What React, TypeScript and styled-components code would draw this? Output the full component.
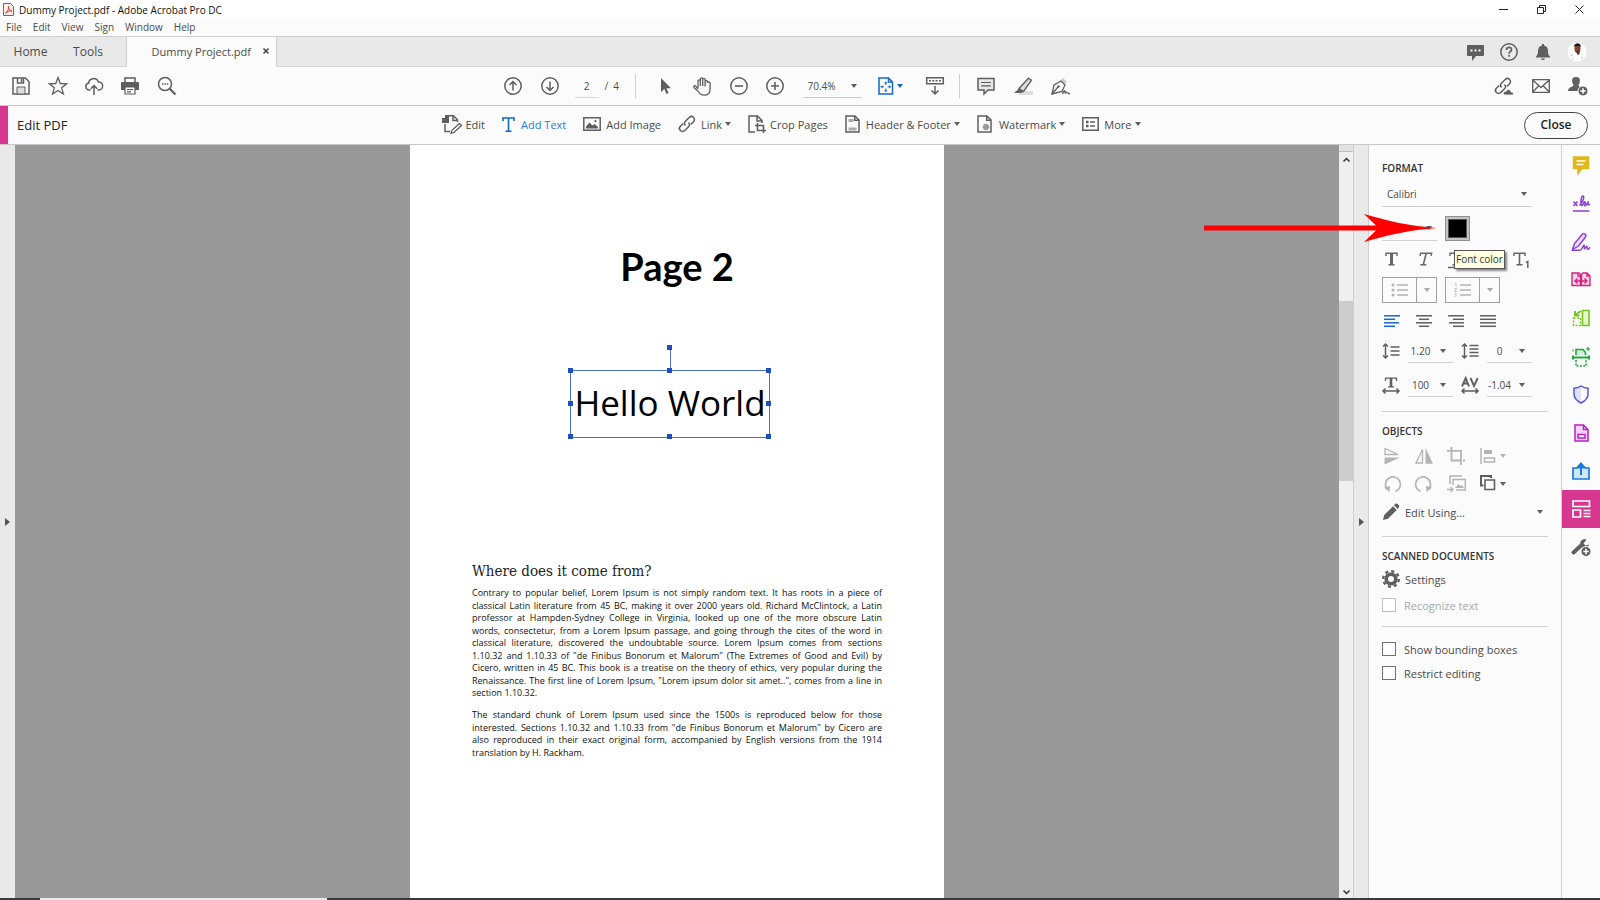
import React from "react";
import styled, { createGlobalStyle, css } from "styled-components";

const ink = "#5f5f5f";
const text = "#4b4b4b";
const line = "#cfcfcf";
const surface = "#fbfbfb";
const blue = "#1568c8";
const faded = "#b4b4b4";

const GlobalStyle = createGlobalStyle`
  * { box-sizing: border-box; }
  body { margin: 0; background: ${surface}; color: ${text}; font-family: "Open Sans", "Noto Sans", sans-serif; font-size: 11px; }
  button, input, select { font: inherit; color: inherit; }
  h1, h2, p { margin: 0; }
  svg { display: block; flex: none; overflow: visible; }
`;

/* ---------- shell ---------- */

const Shell = styled.div`
  display: flex;
  flex-direction: column;
  min-height: 100vh;
`;

const TitleBar = styled.header`
  display: flex;
  align-items: center;
  height: 19px;
  padding: 0 2px 0 3px;
  gap: 5px;
  background: #fff;
  color: #111;
  font-size: 10px;
  line-height: 16px;
`;

const TitleText = styled.span`
  flex: 1;
`;

const CellButton = styled.button<{ $w: number }>`
  display: flex;
  align-items: center;
  justify-content: center;
  width: ${(p) => p.$w}px;
  height: 100%;
  padding: 0;
  border: 0;
  background: none;
  color: ${ink};
`;

const MenuBar = styled.nav`
  display: flex;
  align-items: center;
  height: 17px;
  padding: 0 0 2px 6px;
  gap: 11px;
`;

const MenuItem = styled.button`
  padding: 0;
  border: 0;
  background: none;
  font-size: 10px;
  line-height: 14px;
`;

const TabBar = styled.nav`
  display: flex;
  height: 31px;
  padding-right: 6px;
  background: #e9e9e9;
  border-top: 1px solid ${line};
  box-shadow: inset 0 -1px 0 #d6d6d6;
`;

const MainTab = styled.button<{ $w: number }>`
  width: ${(p) => p.$w}px;
  padding: 0;
  border: 0;
  background: none;
  font-size: 12px;
  line-height: 28px;
`;

const FileTab = styled.div`
  display: flex;
  align-items: center;
  justify-content: flex-end;
  width: 151px;
  margin: 0 auto 0 11px;
  padding: 0 4px 2px 0;
  gap: 9px;
  background: ${surface};
  border: solid ${line};
  border-width: 0 1px;
`;

const ToolBar = styled.div<{ $h: number }>`
  display: grid;
  grid-template-columns: 1fr auto 1fr;
  height: ${(p) => p.$h}px;
  background: ${surface};
  border-bottom: 1px solid #c8c8c8;
`;

const Group = styled.div<{ $start?: number; $end?: number; $right?: boolean; $gap?: number }>`
  display: flex;
  align-items: center;
  gap: ${(p) => p.$gap ?? 0}px;
  padding-left: ${(p) => p.$start ?? 0}px;
  padding-right: ${(p) => p.$end ?? 0}px;
  justify-content: ${(p) => (p.$right ? "flex-end" : "flex-start")};
`;

const PageField = styled.input`
  width: 24px;
  height: 24px;
  padding: 0;
  border: 0;
  border-bottom: 1px solid #d8d8d8;
  background: none;
  text-align: center;
  font-size: 10px;
`;

const PageTotal = styled.span`
  font-size: 10px;
  width: 18px;
  white-space: pre;
`;

const Rule = styled.span`
  width: 1px;
  height: 24px;
  background: ${line};
`;

const Space = styled.div<{ $x: number }>`
  display: flex;
  align-items: center;
  height: 100%;
  padding: 0 ${(p) => p.$x}px;
`;

/* ---------- drop-down ---------- */

const SelectBox = styled.label<{ $w: number; $h: number; $center?: boolean }>`
  display: grid;
  align-items: center;
  width: ${(p) => p.$w}px;
  height: ${(p) => p.$h}px;
  border-bottom: 1px solid ${line};
  > * { grid-area: 1 / 1; }
  > svg { justify-self: end; margin-right: ${(p) => (p.$center ? 7 : 5)}px; pointer-events: none; }
`;

const NativeSelect = styled.select<{ $center?: boolean }>`
  appearance: none;
  width: 100%;
  height: 100%;
  padding: 0 ${(p) => (p.$center ? 20 : 5)}px 0 ${(p) => (p.$center ? 0 : 5)}px;
  border: 0;
  background: none;
  font-size: 10px;
  text-align: ${(p) => (p.$center ? "center" : "left")};
  text-align-last: ${(p) => (p.$center ? "center" : "left")};
`;

const Caret = ({ c = ink }: { c?: string }) => (
  <svg width="6" height="4" viewBox="0 0 6 4"><path d="M0 0h6L3 4z" fill={c} /></svg>
);

const Select = (p: { label: string; value: string; w: number; h: number; center?: boolean }) => (
  <SelectBox $w={p.w} $h={p.h} $center={p.center}>
    <NativeSelect aria-label={p.label} $center={p.center} defaultValue={p.value}>
      <option>{p.value}</option>
    </NativeSelect>
    <Caret />
  </SelectBox>
);

/* ---------- edit bar ---------- */

const EditTitle = styled.h1`
  display: flex;
  align-items: center;
  padding-left: 9px;
  border-left: 8px solid #d83790;
  color: #222;
  font-size: 13px;
  font-weight: 500;
`;

const EditTool = styled.button<{ $active?: boolean; $gap?: number }>`
  display: flex;
  align-items: center;
  height: 100%;
  padding: 0 0 2px;
  gap: ${(p) => p.$gap ?? 5}px;
  border: 0;
  background: none;
  white-space: nowrap;
  color: ${(p) => (p.$active ? "#2b7de0" : text)};
  > svg:last-child:not(:first-child) { margin-left: ${(p) => 3 - (p.$gap ?? 5)}px; }
`;

const CloseButton = styled.button`
  width: 64px;
  height: 27px;
  padding: 0 0 1px;
  border: 1px solid #444;
  border-radius: 14px;
  background: ${surface};
  color: #222;
  font-size: 12px;
  font-weight: 600;
`;

/* ---------- work area ---------- */

const Work = styled.div`
  display: flex;
  flex: 1;
`;

const Strip = styled.button<{ $w: number; $edge?: boolean }>`
  display: flex;
  flex: none;
  align-items: center;
  justify-content: center;
  width: ${(p) => p.$w}px;
  padding: 0;
  border: 0 solid ${line};
  border-width: ${(p) => (p.$edge ? "0 1px" : "0")};
  background: #e9e9e9;
`;

const Canvas = styled.main`
  display: flex;
  flex: 1;
  justify-content: center;
  background: #999;
`;

const Sheet = styled.article`
  width: 534px;
  padding: 97px 62px 40px;
  background: #fff;
  color: #000;
`;

const SheetTitle = styled.h2`
  font: 700 38px/48px Lato, sans-serif;
  text-align: center;
`;

const TextBox = styled.div`
  position: relative;
  width: 200px;
  height: 68px;
  margin: 80px 0 0 98px;
  border: 1px solid #4a6fc4;
  font: 35px/64px "Open Sans", sans-serif;
  text-align: center;
  white-space: nowrap;
`;

const Handle = styled.i<{ $x: number; $y: string }>`
  position: absolute;
  left: ${(p) => p.$x}%;
  top: ${(p) => p.$y};
  width: 5px;
  height: 5px;
  margin: -3px;
  background: #1f4fbf;
`;

const Stem = styled.i`
  position: absolute;
  left: 50%;
  top: -23px;
  width: 1px;
  height: 23px;
  background: #4a6fc4;
`;

const SheetHeading = styled.h2`
  margin-top: 121px;
  font: 400 15px/24px "DejaVu Serif Condensed", "Liberation Serif", serif;
  color: #222;
`;

const Paragraph = styled.p<{ $h: number; $top: number }>`
  display: grid;
  grid-auto-rows: 1fr;
  height: ${(p) => p.$h}px;
  margin-top: ${(p) => p.$top}px;
  font-size: 9px;
  line-height: 12px;
  color: #111;
`;

const Line = styled.span`
  text-align: justify;
  text-align-last: justify;
  white-space: nowrap;
  &:last-child { text-align-last: left; }
`;

const ScrollTrack = styled.div`
  display: flex;
  flex: none;
  flex-direction: column;
  align-items: center;
  width: 14px;
  padding-bottom: 3px;
  background: #efefef;
`;

const Splitter = styled.div`
  width: 100%;
  height: 7px;
  margin-bottom: 5px;
  background: #e3e3e3;
  border-bottom: 1px solid #bbb;
`;

const Thumb = styled.div`
  width: 100%;
  height: 180px;
  margin: 137px 0 auto;
  background: #cdcdcd;
`;

/* ---------- format panel ---------- */

const Panel = styled.aside`
  flex: none;
  width: 193px;
  padding: 13px 13px 13px 13px;
  border-right: 1px solid ${line};
  background: ${surface};
`;

const PanelTitle = styled.h2<{ $top?: number }>`
  margin-top: ${(p) => p.$top ?? 0}px;
  color: #333;
  font-size: 10px;
  font-weight: 600;
  line-height: 20px;
`;

const Row = styled.div<{ $top: number; $h: number; $gap?: number }>`
  position: relative;
  display: flex;
  align-items: center;
  gap: ${(p) => p.$gap ?? 12}px;
  height: ${(p) => p.$h}px;
  margin-top: ${(p) => p.$top}px;
`;

const Divider = styled.hr<{ $top: number }>`
  height: 1px;
  margin: ${(p) => p.$top}px 0 0;
  border: 0;
  background: ${line};
`;

const Swatch = styled.button`
  width: 25px;
  height: 25px;
  padding: 0;
  border: 1px solid #909090;
  background: #000;
  box-shadow: inset 0 0 0 2px #c4c4c4, inset 0 0 0 3px #555;
`;

const Tooltip = styled.div`
  position: absolute;
  left: 72px;
  top: 0;
  padding: 0 1px 1px;
  border: 1px solid #555;
  background: #ffffe1;
  box-shadow: 2px 2px 2px #0007;
  color: #333;
  font-size: 10px;
  line-height: 16px;
  white-space: nowrap;
`;

const Pointer = styled.svg`
  position: absolute;
  right: 111px;
  top: -1px;
  z-index: 2;
  pointer-events: none;
`;

const SplitButton = styled.div`
  display: flex;
  width: 55px;
  height: 26px;
  border: 1px solid #a0a0a0;
  > button + button { border-left: 1px solid #a0a0a0; }
`;

const WideButton = styled.button`
  display: flex;
  align-items: center;
  width: 161px;
  height: 20px;
  padding: 0;
  gap: 5px;
  border: 0;
  background: none;
  > svg:last-child:not(:first-child) { margin-left: auto; }
`;

const CheckLabel = styled.label<{ $top: number; $off?: boolean }>`
  display: flex;
  align-items: center;
  gap: 8px;
  height: 20px;
  margin-top: ${(p) => p.$top}px;
  ${(p) => p.$off && css`color: #a9a9a9;`}
`;

const Check = styled.input`
  appearance: none;
  width: 14px;
  height: 14px;
  margin: 0;
  border: 1px solid #707070;
  background: #fff;
  &:disabled { border-color: #c0c0c0; }
`;

/* ---------- tool rail ---------- */

const Rail = styled.nav`
  flex: none;
  width: 38px;
  padding-top: 3px;
  background: ${surface};
`;

const RailButton = styled.button<{ $active?: boolean }>`
  display: flex;
  align-items: center;
  justify-content: center;
  width: 100%;
  height: 38px;
  padding: 0;
  border: 0;
  background: ${(p) => (p.$active ? "#d83790" : "none")};
`;

const TaskEdge = styled.div`
  display: flex;
  height: 2px;
  padding-left: 40px;
  background: #3a3a3a;
`;

const TaskWindow = styled.span`
  width: 287px;
  background: #e9e9e9;
`;

/* ---------- icons ---------- */

type IconProps = { w?: number; h?: number; c?: string; s?: number; children: React.ReactNode };
const Icon = ({ w = 18, h = 18, c = ink, s = 1.5, children }: IconProps) => (
  <svg width={w} height={h} viewBox={`0 0 ${w} ${h}`} fill="none" stroke={c} strokeWidth={s} aria-hidden="true">
    {children}
  </svg>
);

const Save = () => (
  <Icon><path d="M1 1h12.5L17 4.500V17H1z" /><path d="M5.500 1v5h6V1M9.500 2v3" /><path d="M5 17v-7h8v7z" fill="#ddd" strokeWidth="1" /></Icon>
);
const Star = () => (
  <Icon w={20} h={20} s={1.300}><path d="M10 1.500l2.300 6 6.400.3-5 4 1.700 6.200-5.400-3.500L4.600 18l1.700-6.200-5-4 6.400-.3z" /></Icon>
);
const CloudUp = () => (
  <Icon><path d="M5.500 13H4a3.500 3.500 0 0 1-.4-6.900A5 5 0 0 1 13.300 5 4 4 0 0 1 14 13h-1.500" /><path d="M9 18V9M5.800 11.800L9 8.600l3.200 3.200" /></Icon>
);
const Printer = () => (
  <Icon><path d="M4 5V1h10v4" /><path d="M1 5h16a1 1 0 0 1 1 1v7h-4v-3H4v3H0V6a1 1 0 0 1 1-1z" fill={ink} stroke="none" /><path d="M4 10h10v7H4zM6 12.500h6M6 14.800h4" strokeWidth="1.200" /></Icon>
);
const Search = () => (
  <Icon w={20} h={20}><circle cx="8" cy="8" r="6.500" /><path d="M12.500 12.500l6 6" strokeWidth="2.200" /><path d="M4.800 8h1.500M7.300 8h1.500M9.800 8h1.500" /></Icon>
);
const ArrowCircle = ({ down }: { down?: boolean }) => (
  <Icon><circle cx="9" cy="9" r="8.200" /><path d={down ? "M9 4.500v9M5.500 10L9 13.500l3.500-3.500" : "M9 13.500v-9M5.500 8L9 4.500 12.500 8"} /></Icon>
);
const ZoomCircle = ({ plus }: { plus?: boolean }) => (
  <Icon><circle cx="9" cy="9" r="8.200" /><path d={plus ? "M5 9h8M9 5v8" : "M5 9h8"} strokeWidth="1.600" /></Icon>
);
const Cursor = () => (
  <Icon w={10} h={16}><path d="M0 0v14l3.300-3 2.200 5 2-.9-2-4.800H10z" fill={ink} stroke="none" /></Icon>
);
const Hand = () => (
  <Icon w={18} h={19} s={1.300}><path d="M5 11V4.200c0-1.800 2.300-1.800 2.300 0V9V2.300c0-1.900 2.400-1.900 2.400 0V9V2.800c0-1.900 2.400-1.900 2.400 0V9.500V4.600c0-1.700 2.300-1.700 2.300 0M14.400 4.600l.1 1.400c0-1.500 2.600-1.500 2.600 0V12c0 4-2.300 6.200-6 6.200-3.200 0-4.700-1.500-6-3.900L1 10.600C0 8.800 2 8 3 9.300L5 12" /></Icon>
);
const FitPage = () => (
  <Icon w={16} c={blue}><path d="M1 1h9.500L14.500 5v12H1z" /><path d="M10.500 1v4h4" /><path d="M7.800 4.500l-1.300 1.700h2.600zM7.800 15l-1.300-1.700h2.600zM2.500 9.800l1.700-1.300v2.600zM13 9.800l-1.700-1.300v2.600z" fill={blue} strokeWidth=".4" /><path d="M7.800 6v2M7.800 11.500v2M4 9.800h2M9.600 9.800h2" strokeWidth="1" /></Icon>
);
const Keyboard = () => (
  <Icon><path d="M.7.700h16.600v6H.7zM3 3.700h2M6.300 3.700h2M9.600 3.700h2M13 3.700h2" /><path d="M9 9v8M5.500 13.500L9 17l3.500-3.500" /></Icon>
);
const Comment = () => (
  <Icon><path d="M1 1.500h16v11.500h-6l-4 4v-4H1z" fill="#e8e8e8" /><path d="M4 5.500h10M4 8.800h10" strokeWidth="1.200" /></Icon>
);
const Highlight = () => (
  <Icon w={19}><path d="M7 14h12v4H4z" fill="#ddd" stroke="none" /><path d="M14.500 1.200l3 2L9.500 14.500 5 11.500z" fill="#ddd" strokeWidth="1.300" /><path d="M5 11.500l4.500 3-2 1.500H0z" fill={ink} stroke="none" /></Icon>
);
const Sign = () => (
  <Icon w={19}><path d="M11 2l4 4" strokeWidth="3" stroke="#ccc" /><path d="M1 17l2-9 7-4 4 4-3 6.500z" strokeWidth="1.300" /><path d="M1 17l6-7" strokeWidth="1.300" /><circle cx="7.500" cy="9.500" r="1.200" fill={ink} stroke="none" /><path d="M11.500 17c1-3 2.500-4 2.500-2.500s0 2 1 1 1.500 1.500 4 1.200" strokeWidth="1.400" /></Icon>
);
const EditPage = () => (
  <Icon w={20} h={19}><path d="M0 3h7v5H0zM3 0h4v3H3z" fill={ink} stroke="none" /><path d="M5 .8h6.500l4 4V7M11 1v4.500h4M3 9v7.500h5" /><path d="M17.500 8.500l2 2-7.500 7-3 .8 1-3z" fill="#fff" strokeWidth="1.300" /></Icon>
);
const AddText = () => (
  <Icon w={13} h={15} c={blue}><path d="M1 4V1h11v3M6.500 1v13M3.500 14.200h6" strokeWidth="1.600" /></Icon>
);
const Image = () => (
  <Icon w={18} h={14}><path d="M.8.800h16.400v12.400H.8z" /><path d="M3 11.500V9.500l3.500-4 3 3 2-1.500 3.500 3v1.500z" fill={ink} stroke="none" /><circle cx="12.500" cy="4.200" r="1.100" fill={ink} stroke="none" /></Icon>
);
const LinkShape = () => (
  <g><path d="M7.500 10.500c-1.800-1.800-1-3.200 0-4.200l3.700-3.800c1.200-1.200 3.200-1.200 4.400 0s1.200 3 0 4.200L12.800 9.500" /><path d="M10.500 7.500c1.800 1.800 1 3.200 0 4.200l-3.700 3.800c-1.200 1.200-3.200 1.200-4.400 0s-1.200-3 0-4.200L5.200 8.500" /></g>
);
const Crop = () => (
  <Icon><path d="M7 17H1V1h8.500L14 5.500V8M9 1v5h5" /><path d="M9.500 8v7.500H18M7 10.500h8.500V18" strokeWidth="1.600" /></Icon>
);
const HeaderFooter = () => (
  <Icon w={15}><path d="M3.500 4h5v3h-5zM3.500 12.500h8v3h-8z" fill="#aaa" stroke="none" /><path d="M1 1h9l4 4v12H1zM9.700 1v4.300H14" /></Icon>
);
const Watermark = () => (
  <Icon w={15}><circle cx="9" cy="12" r="3" fill="#999" stroke="#999" strokeWidth="1" strokeDasharray="1 1" /><path d="M1 1h9l4 4v12H1zM9.700 1v4.300H14" /></Icon>
);
const More = () => (
  <Icon w={17} h={14}><path d="M.8.800h15.400v12.400H.8zM8 5h5M8 9h5" /><path d="M4 3.700h2.500v2.500H4zM4 7.800h2.500v2.500H4z" fill={ink} stroke="none" /></Icon>
);
const AlignIcon = ({ rows, c = ink }: { rows: [number, number][]; c?: string }) => (
  <Icon w={16} h={12} c={c}>{rows.map(([a, b], i) => <path key={i} d={`M${a} ${i * 3.5 + 0.8}h${b}`} strokeWidth="1.500" />)}</Icon>
);
const Serif = ({ italic, under, sub, heavy }: { italic?: boolean; under?: boolean; sub?: boolean; heavy?: boolean }) => (
  <Icon w={16} h={14} c="#666">
    <g transform={italic ? "skewX(-14) translate(3 0)" : undefined}>
      <path d="M2 4V1.200h11V4M4.500 12.800h6" strokeWidth="1.400" /><path d="M7.500 1v12" strokeWidth={heavy ? 3 : 1.600} />
    </g>
    {under && <path d="M0 15.500h14" />}
    {sub && <path d="M14 10.500l1.800-1v6.500" />}
  </Icon>
);
const ListIcon = ({ numbered }: { numbered?: boolean }) => (
  <Icon w={18} h={14} c={faded}>
    <path d="M6 2h11M6 7h11M6 12h11" strokeWidth="1.300" />
    {numbered
      ? <path d="M1 .5h1V3.500M.5 5.500h2L.7 8.500h2M.5 10.500h2L1.500 12l1 1-2 .5" strokeWidth=".8" />
      : <g fill={faded} stroke="none"><circle cx="2" cy="2" r="1.500" /><circle cx="2" cy="7" r="1.500" /><circle cx="2" cy="12" r="1.500" /></g>}
  </Icon>
);
const LineHeight = ({ tall }: { tall?: boolean }) => (
  <Icon h={16}><path d="M3.500 1v14M1 3.500L3.500 1 6 3.500M1 12.500L3.500 15 6 12.500" /><path d={tall ? "M8.500 2.500h9M8.500 6h9M8.500 9.500h9M8.500 13h9" : "M8.500 4h9M8.500 8h9M8.500 12h9"} /></Icon>
);
const Width = ({ av }: { av?: boolean }) => (
  <Icon h={17}>
    {av ? <path d="M1 9.500L4.700 1 8 9.500M2.200 6.500h5M9.500 1L13 9l3.700-8" strokeWidth="1.900" /> : <><path d="M3.500 4V1.200h11V4M6 9.800h6" strokeWidth="1.300" /><path d="M9 1v9" strokeWidth="2.600" /></>}
    <path d="M1 14h16M3.500 11.500L1 14l2.500 2.500M14.500 11.500L17 14l-2.500 2.500" />
  </Icon>
);
const FlipV = () => <Icon c={faded}><path d="M2 1.500v6h13z" strokeWidth="1.300" /><path d="M1.500 10.500H17L1.500 17.500z" fill={faded} stroke="none" /></Icon>;
const FlipH = () => <Icon c={faded}><path d="M7.500 16V2.500L1 16z" strokeWidth="1.300" /><path d="M10.500 1v15.700H18z" fill={faded} stroke="none" /></Icon>;
const CropObj = () => <Icon c={faded}><path d="M4.500 0v13.500H14M0 3.800h14V18" strokeWidth="1.800" /><path d="M16 13.500h2" strokeWidth="1.800" /></Icon>;
const AlignObj = () => <Icon w={16} c={faded}><path d="M1 1v16" /><path d="M4 3h8v4H4z" fill={faded} stroke="none" /><path d="M4.500 11h10v4h-10z" /></Icon>;
const Undo = ({ flip }: { flip?: boolean }) => (
  <Icon c={faded}><g transform={flip ? "translate(18 0) scale(-1 1)" : undefined}><path d="M4 14A7.500 7.500 0 1 1 12.500 16.500" strokeWidth="1.700" /><path d="M1 12.500l6-1.500-.5 6z" fill={faded} stroke="none" /></g></Icon>
);
const Replace = () => <Icon w={19} c={faded}><path d="M3 9V1h12M6 10V4.500h12.300V15H9" /><path d="M8 13l3.500-4 2 2 1.500-1 2 3z" fill={faded} stroke="none" /><path d="M0 14.500h6M3.500 12L6 14.500 3.500 17" /></Icon>;
const Arrange = () => <Icon w={16}><path d="M3.500 10.500H1V1h10v2" strokeWidth="2" /><path d="M5 5h9.500v9.500H5z" strokeWidth="1.600" /></Icon>;
const Pencil = () => <Icon><path d="M1 17l1.200-5L11 3.300 14.700 7 6 15.800zM12 2.300l1.500-1.500c1.500-1.200 4.500 1.500 3.500 3.500L15.700 6z" fill={ink} stroke="none" /></Icon>;
const Gear = () => (
  <Icon><circle cx="9" cy="9" r="4.800" strokeWidth="3.600" /><circle cx="9" cy="9" r="7.800" strokeWidth="2.400" strokeDasharray="3.060 3.060" /></Icon>
);

const railIcons: [string, React.ReactNode][] = [
  ["Comment", <Icon h={22} c="#dfb81c"><path d="M1.500 1h15v11.500H10l-4 5v-5H1.500z" fill="#dfb81c" /><path d="M4.500 5h9M4.500 8.500h7" stroke="#fff" /></Icon>],
  ["Fill and sign", <Icon h={22} c="#8a3fd6" s={1.500}><path d="M.8 17h16.500M1.500 7.500l4 4.500M5.500 7.500l-4 4.500M7.500 11.500c4-4 5-9 3.500-9.500s-2.500 5-2 8 2.500.5 3-1.500 2 0 1 2 1.500 1.500 2.500-1.500c0-1.500 1.500-1 .5 0-.7 2 .5 2.500 2 1" /></Icon>],
  ["Certificates", <Icon w={20} h={20} c="#8a3fd6" s={1.400}><path d="M1.500 16.500l2-6L11 1.500c2-2 5 0 3.500 2.500l-7 9z" fill="#e6d8f7" /><path d="M1 17.200h8c2 0 3-5 4-5s-.5 3.500.5 3.500 1.500-2.500 2.300-2.500-.5 3 1 3 1-.5 2.200-2" /></Icon>],
  ["Combine files", <Icon w={20} h={18} c="#d4237f" s={1.400}><path d="M1 1h7l1.500 1.500V13.500H1zM10.500 13.500V2.500L12 1h4l3 3v9.500z" fill="#f9d5e7" /><path d="M4 9h12M6.500 6.500L4 9l2.500 2.500M13.500 6.500L16 9l-2.500 2.500M7 1v3h2M16 1v3h3" /></Icon>],
  ["Organize pages", <Icon h={20} c="#79c51d" s={1.600}><path d="M10.500 1.500h6.500v15h-6.500z" fill="#e4f5cf" /><path d="M1.500 9h7v7.500h-7z" strokeDasharray="2 1.500" /><path d="M9 2L3 6M3 2v4.500h4.500" strokeWidth="2" /></Icon>],
  ["Enhance scans", <Icon h={21} c="#1fa83f" s={1.600}><path d="M4 8V2.500h7l2.500 3V8" fill="#d3f0da" /><path d="M1 8.500v4M17 8.500v4M1 10.500h16" strokeWidth="2" /><path d="M4 13v6h10v-6" strokeDasharray="2 1.300" /><path d="M16 0v4M14 2h4M1 2.500v2" strokeWidth="1.200" /></Icon>],
  ["Protect", <Icon w={16} h={20} c="#5558dd"><path d="M8 1.500v16C4 15.500 1 12.500 1 9V3.500z" fill="#dfe0fa" stroke="none" /><path d="M8 1c2 1.500 4.500 2.300 7 2.300V9c0 4-3 7-7 9-4-2-7-5-7-9V3.300C3.500 3.300 6 2.500 8 1z" /></Icon>],
  ["Prepare form", <Icon w={15} c="#bb1fc4"><path d="M1 1h8.500L14 5.500V17H1zM9.500 1v4.500H14" fill="#f3d3f5" /><path d="M4 10.500h7v3.500H4z" fill="#fff" /></Icon>],
  ["Share", <Icon h={19} c="#1a7ae0"><path d="M5 6H1v11h16V6h-4" fill="#d2e6fb" strokeWidth="1.700" /><path d="M9 13V3M5.500 5.500L9 1.500l3.500 4z" fill="#1a7ae0" strokeWidth="2" /></Icon>],
  ["Edit PDF", <Icon c="#fff" s={1.700}><path d="M1 1h16.500v5.500H1zM1 10h7.500v7H1zM11.500 10.500h7M11.500 13.500h7M11.500 16.500h7" /></Icon>],
  ["More tools", <Icon w={19} h={19}><path d="M1.500 14.500l7-6.500" strokeWidth="4" strokeLinecap="round" /><path d="M14.500 1.500a4.500 4.500 0 1 0 2.500 5l-3.500 1-2-2z" fill={ink} stroke="none" /><circle cx="14" cy="13.500" r="5" fill={ink} stroke={surface} strokeWidth="1" /><path d="M11.300 13.500h5.400M14 10.800v5.400" stroke="#fff" strokeWidth="1.600" /></Icon>],
];

const first = [
  "Contrary to popular belief, Lorem Ipsum is not simply random text. It has roots in a piece of",
  "classical Latin literature from 45 BC, making it over 2000 years old. Richard McClintock, a Latin",
  "professor at Hampden-Sydney College in Virginia, looked up one of the more obscure Latin",
  "words, consectetur, from a Lorem Ipsum passage, and going through the cites of the word in",
  "classical literature, discovered the undoubtable source. Lorem Ipsum comes from sections",
  "1.10.32 and 1.10.33 of \"de Finibus Bonorum et Malorum\" (The Extremes of Good and Evil) by",
  "Cicero, written in 45 BC. This book is a treatise on the theory of ethics, very popular during the",
  "Renaissance. The first line of Lorem Ipsum, \"Lorem ipsum dolor sit amet..\", comes from a line in",
  "section 1.10.32.",
];
const second = [
  "The standard chunk of Lorem Ipsum used since the 1500s is reproduced below for those",
  "interested. Sections 1.10.32 and 1.10.33 from \"de Finibus Bonorum et Malorum\" by Cicero are",
  "also reproduced in their exact original form, accompanied by English versions from the 1914",
  "translation by H. Rackham.",
];
const handles: [number, string][] = [
  [0, "0%"], [50, "0%"], [100, "0%"], [0, "50%"], [100, "50%"], [0, "100%"], [50, "100%"], [100, "100%"], [50, "-23px"],
];

const Cell = ({ w, label, children }: { w: number; label: string; children: React.ReactNode }) => (
  <CellButton $w={w} aria-label={label}>{children}</CellButton>
);

export default function App() {
  return (
    <Shell>
      <GlobalStyle />
      <TitleBar>
        <Icon w={11} h={13} c="#e8372c" s={1}>
          <path d="M.5.500h7l3 3v9H.5z" fill="#fdecea" />
          <path d="M2.500 10c2-1 3.500-4 3-6.500-.5 2 1.500 4.500 3.500 4.500-2-.5-5 .5-6.500 2z" />
        </Icon>
        <TitleText>Dummy Project.pdf - Adobe Acrobat Pro DC</TitleText>
        <Group>
          <Cell w={38} label="Minimize"><Icon w={9} h={9} c="#222" s={1}><path d="M0 4.500h9" /></Icon></Cell>
          <Cell w={38} label="Restore"><Icon w={9} h={9} c="#222" s={1}><path d="M.5 2.500h6v6h-6zM2.500 2.500v-2h6v6h-2" /></Icon></Cell>
          <Cell w={38} label="Close window"><Icon w={9} h={9} c="#222" s={1}><path d="M.5.500l8 8M8.500.500l-8 8" /></Icon></Cell>
        </Group>
      </TitleBar>
      <MenuBar>
        {["File", "Edit", "View", "Sign", "Window", "Help"].map((m) => <MenuItem key={m}>{m}</MenuItem>)}
      </MenuBar>
      <TabBar>
        <MainTab $w={61}>Home</MainTab>
        <MainTab $w={54}>Tools</MainTab>
        <FileTab>
          <span>Dummy Project.pdf</span>
          <Cell w={12} label="Close tab"><Icon w={6} h={6} c="#444"><path d="M.5.500l5 5M5.500.500l-5 5" /></Icon></Cell>
        </FileTab>
        <Cell w={34} label="Notifications list">
          <Icon w={17} h={17}><path d="M1 1h15a1 1 0 0 1 1 1v9a1 1 0 0 1-1 1H9l-4 5v-5H1a1 1 0 0 1-1-1V2a1 1 0 0 1 1-1z" fill={ink} stroke="none" /><path d="M3.500 6.500h2M7.500 6.500h2M11.500 6.500h2" stroke="#fff" strokeWidth="1.800" /></Icon>
        </Cell>
        <Cell w={34} label="Help">
          <Icon><circle cx="9" cy="9" r="8.200" /><path d="M6.500 7c0-3.500 5-3.200 5-.3 0 1.800-2.400 1.800-2.400 4M9.100 12v1.800" strokeWidth="1.700" /></Icon>
        </Cell>
        <Cell w={34} label="Alerts">
          <Icon w={14} h={16}><path d="M6 0h2v1.500c3 .5 4 3 4 5.500 0 3 .5 4 2 5.500v1H0v-1C1.500 11 2 10 2 7c0-2.500 1-5 4-5.500zM5 14.500h4c-.5 2-3.500 2-4 0z" fill={ink} stroke="none" /></Icon>
        </Cell>
        <Cell w={34} label="Account">
          <Icon w={20} h={20}><circle cx="10" cy="10" r="9.500" fill="#fff" stroke="none" /><ellipse cx="10.500" cy="6.500" rx="3" ry="4.500" fill="#7a4436" stroke="none" /><path d="M7 5c0-5 7-5 7 0l-1-1H8z" fill="#26191a" stroke="none" /><path d="M9.500 9h3v3l-2 1z" fill="#5a2f28" stroke="none" /><path d="M3 14l3-1.500M14 15l2 1M5 17h1.500" stroke="#e3b8b8" strokeWidth="1" /></Icon>
        </Cell>
      </TabBar>

      <ToolBar $h={39}>
        <Group $start={2}>
          <Cell w={37} label="Save"><Save /></Cell>
          <Cell w={37} label="Star"><Star /></Cell>
          <Cell w={36} label="Upload"><CloudUp /></Cell>
          <Cell w={36} label="Print"><Printer /></Cell>
          <Cell w={38} label="Find"><Search /></Cell>
        </Group>
        <Group $end={19}>
          <Cell w={37} label="Previous page"><ArrowCircle /></Cell>
          <Cell w={37} label="Next page"><ArrowCircle down /></Cell>
          <Space $x={6}><PageField aria-label="Page number" defaultValue="2" /></Space>
          <PageTotal>/  4</PageTotal>
          <Space $x={12}><Rule /></Space>
          <Cell w={36} label="Select"><Cursor /></Cell>
          <Cell w={37} label="Pan"><Hand /></Cell>
          <Cell w={36} label="Zoom out"><ZoomCircle /></Cell>
          <Cell w={37} label="Zoom in"><ZoomCircle plus /></Cell>
          <Space $x={9}><Select label="Zoom" value="70.4%" w={59} h={24} /></Space>
          <Cell w={40} label="Fit page"><Group $gap={3}><FitPage /><Caret c={blue} /></Group></Cell>
          <Space $x={6}><Cell w={36} label="Read mode"><Keyboard /></Cell></Space>
          <Rule />
          <Space $x={8}>
            <Cell w={37} label="Add comment"><Comment /></Cell>
            <Cell w={37} label="Highlight"><Highlight /></Cell>
            <Cell w={37} label="Sign"><Sign /></Cell>
          </Space>
        </Group>
        <Group $right $end={4}>
          <Cell w={37} label="Share link"><Icon w={20}><LinkShape /><path d="M10 18c-2-3 1-4 2-3.500 1-3 5-2.500 5 .5 3-.5 3 3 1.500 3z" fill={ink} stroke={surface} strokeWidth=".8" /></Icon></Cell>
          <Cell w={37} label="Send by email"><Icon h={14}><path d="M.7.700h16.600v12.600H.7zM.7 1L9 8.500 17.300 1M.7 13l6-6M17.300 13l-6-6" strokeWidth="1.300" /></Icon></Cell>
          <Cell w={37} label="Invite people"><Icon w={20} h={19}><path d="M8 0c5 0 4.500 5 2.500 8 0 2 3.500 2 4.500 4v2H0c0-4 5.500-4 5.500-6C3.500 5 3 0 8 0z" fill={ink} stroke="none" /><circle cx="15" cy="14" r="5" fill={ink} stroke={surface} strokeWidth="1" /><path d="M12.300 14h5.400M15 11.300v5.400" stroke="#fff" strokeWidth="1.500" /></Icon></Cell>
        </Group>
      </ToolBar>

      <ToolBar $h={39}>
        <EditTitle>Edit PDF</EditTitle>
        <Group $gap={17} $end={18}>
          <EditTool $gap={4}><EditPage />Edit</EditTool>
          <EditTool $active $gap={6}><AddText />Add Text</EditTool>
          <EditTool><Image />Add Image</EditTool>
          <EditTool><Icon><LinkShape /></Icon>Link<Caret /></EditTool>
          <EditTool $gap={4}><Crop />Crop Pages</EditTool>
          <EditTool $gap={6}><HeaderFooter />Header &amp; Footer<Caret /></EditTool>
          <EditTool $gap={7}><Watermark />Watermark<Caret /></EditTool>
          <EditTool><More />More<Caret /></EditTool>
        </Group>
        <Group $right $end={12}><CloseButton>Close</CloseButton></Group>
      </ToolBar>

      <Work>
        <Strip $w={15} aria-label="Show navigation pane"><Icon w={5} h={8}><path d="M0 0l5 4-5 4z" fill="#555" stroke="none" /></Icon></Strip>
        <Canvas>
          <Sheet>
            <SheetTitle>Page 2</SheetTitle>
            <TextBox>
              Hello World
              <Stem />
              {handles.map(([x, y]) => <Handle key={x + y} $x={x} $y={y} />)}
            </TextBox>
            <SheetHeading>Where does it come from?</SheetHeading>
            <Paragraph $h={113} $top={4}>{first.map((l) => <Line key={l}>{l}</Line>)}</Paragraph>
            <Paragraph $h={50} $top={9}>{second.map((l) => <Line key={l}>{l}</Line>)}</Paragraph>
          </Sheet>
        </Canvas>
        <ScrollTrack>
          <Splitter />
          <Icon w={7} h={7} c="#333"><path d="M.5 4.500l3-3 3 3" /></Icon>
          <Thumb />
          <Icon w={7} h={5} c="#333"><path d="M.5.500l3 3 3-3" /></Icon>
        </ScrollTrack>
        <Strip $w={16} $edge aria-label="Hide tool panel"><Icon w={5} h={8}><path d="M0 0l5 4-5 4z" fill="#555" stroke="none" /></Icon></Strip>

        <Panel>
          <PanelTitle>FORMAT</PanelTitle>
          <Row $top={4} $h={25}><Select label="Font" value="Calibri" w={150} h={25} /></Row>
          <Row $top={8} $h={26} $gap={8}>
            <Select label="Font size" value="" w={55} h={26} />
            <Swatch aria-label="Font color" />
            <Pointer width="233" height="28" viewBox="0 0 233 28">
              <path d="M0 11.500h172L160 0c24 7 45 12 73 14-28 2-49 7-73 14l12-11.500H0z" fill="#fe0000" />
            </Pointer>
          </Row>
          <Row $top={9} $h={18}>
            <Cell w={20} label="Bold"><Serif heavy /></Cell>
            <Cell w={20} label="Italic"><Serif italic /></Cell>
            <Cell w={20} label="Underline"><Serif under /></Cell>
            <Cell w={20} label="Superscript"><Serif /></Cell>
            <Cell w={20} label="Subscript"><Serif sub /></Cell>
            <Tooltip role="tooltip">Font color</Tooltip>
          </Row>
          <Row $top={9} $h={26} $gap={8}>
            <SplitButton><Cell w={34} label="Bulleted list"><ListIcon /></Cell><Cell w={20} label="Bullet styles"><Caret c="#aaa" /></Cell></SplitButton>
            <SplitButton><Cell w={34} label="Numbered list"><ListIcon numbered /></Cell><Cell w={20} label="Number styles"><Caret c="#aaa" /></Cell></SplitButton>
          </Row>
          <Row $top={9} $h={18}>
            <Cell w={20} label="Align left"><AlignIcon c={blue} rows={[[0, 16], [0, 11], [0, 15], [0, 11]]} /></Cell>
            <Cell w={20} label="Align center"><AlignIcon rows={[[0, 16], [3, 10], [0, 16], [3, 10]]} /></Cell>
            <Cell w={20} label="Align right"><AlignIcon rows={[[0, 16], [5, 11], [1, 15], [5, 11]]} /></Cell>
            <Cell w={20} label="Justify"><AlignIcon rows={[[0, 16], [0, 16], [0, 16], [0, 16]]} /></Cell>
          </Row>
          <Row $top={9} $h={24} $gap={8}>
            <LineHeight /><Select label="Line spacing" value="1.20" w={45} h={24} center />
            <LineHeight tall /><Select label="Paragraph spacing" value="0" w={45} h={24} center />
          </Row>
          <Row $top={10} $h={24} $gap={8}>
            <Width /><Select label="Horizontal scaling" value="100" w={45} h={24} center />
            <Width av /><Select label="Character spacing" value="-1.04" w={45} h={24} center />
          </Row>
          <Divider $top={14} />
          <PanelTitle $top={9}>OBJECTS</PanelTitle>
          <Row $top={6} $h={18}>
            <Cell w={20} label="Flip vertical"><FlipV /></Cell>
            <Cell w={20} label="Flip horizontal"><FlipH /></Cell>
            <Cell w={20} label="Crop"><CropObj /></Cell>
            <Cell w={30} label="Align objects"><Group $gap={4}><AlignObj /><Caret c={faded} /></Group></Cell>
          </Row>
          <Row $top={10} $h={18}>
            <Cell w={20} label="Rotate left"><Undo /></Cell>
            <Cell w={20} label="Rotate right"><Undo flip /></Cell>
            <Cell w={20} label="Replace image"><Replace /></Cell>
            <Cell w={30} label="Arrange"><Group $gap={4}><Arrange /><Caret /></Group></Cell>
          </Row>
          <Row $top={9} $h={20}><WideButton><Pencil /> Edit Using...<Caret /></WideButton></Row>
          <Divider $top={14} />
          <PanelTitle $top={9}>SCANNED DOCUMENTS</PanelTitle>
          <Row $top={3} $h={20}><WideButton><Gear /> Settings</WideButton></Row>
          <CheckLabel $top={6} $off><Check type="checkbox" disabled />Recognize text</CheckLabel>
          <Divider $top={11} />
          <CheckLabel $top={12}><Check type="checkbox" />Show bounding boxes</CheckLabel>
          <CheckLabel $top={4}><Check type="checkbox" />Restrict editing</CheckLabel>
        </Panel>

        <Rail>
          {railIcons.map(([label, icon]) => (
            <RailButton key={label} aria-label={label} $active={label === "Edit PDF"}>{icon}</RailButton>
          ))}
        </Rail>
      </Work>
      <TaskEdge><TaskWindow /></TaskEdge>
    </Shell>
  );
}
